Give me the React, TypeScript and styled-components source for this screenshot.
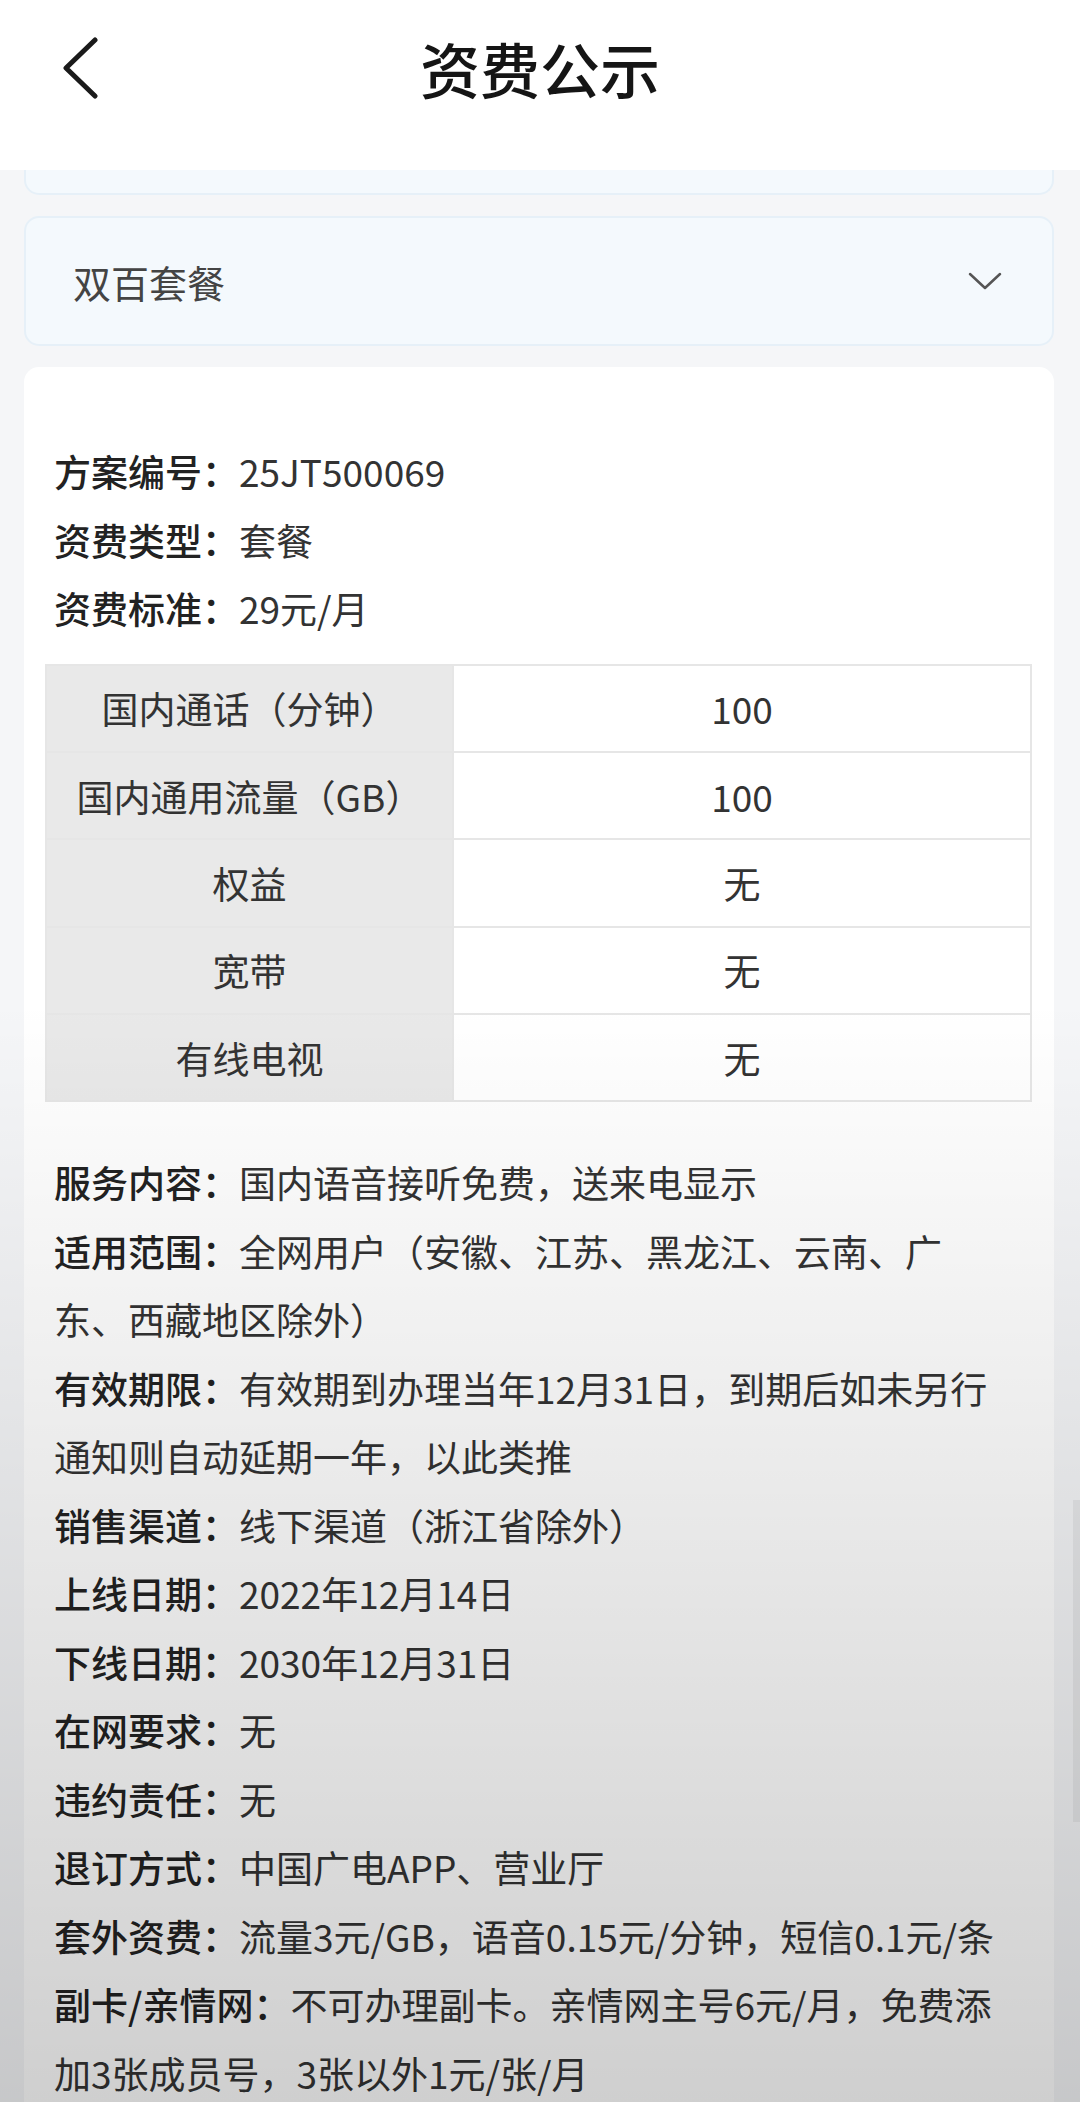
import React from "react";
import styled, { createGlobalStyle } from "styled-components";

const GlobalStyle = createGlobalStyle`
  html, body {
    margin: 0;
    padding: 0;
    background: #f5f6f8;
  }
  body {
    font-family: "Noto Sans CJK SC", "Noto Sans", "Liberation Sans", sans-serif;
    color: #333;
  }
  * { box-sizing: border-box; }
`;

const Page = styled.div`
  position: relative;
  width: 1080px;
  height: 2102px;
  overflow: hidden;
  background: #f5f6f8;
`;

const Header = styled.header`
  height: 170px;
  background: #ffffff;
  display: grid;
  grid-template-columns: 1fr auto 1fr;
  align-items: center;
  padding-bottom: 34px;
`;

const BackButton = styled.button`
  justify-self: start;
  margin-left: 62px;
  border: none;
  background: none;
  padding: 0;
  display: flex;
  align-items: center;
  cursor: pointer;
`;

const Title = styled.h1`
  margin: 0;
  font-size: 60px;
  line-height: 1;
  font-weight: 500;
  color: #151515;
  letter-spacing: 0;
`;

const Content = styled.main`
  display: flex;
  flex-direction: column;
  gap: 21px;
  padding: 0 26px 0 24px;
`;

const CutCard = styled.div`
  height: 25px;
  background: #f4f9fd;
  border: 2px solid #e6f0f8;
  border-top: none;
  border-radius: 0 0 15px 15px;
`;

const Collapse = styled.div`
  height: 130px;
  background: #f4f9fd;
  border: 2px solid #e6f0f8;
  border-radius: 15px;
  display: flex;
  align-items: center;
  justify-content: space-between;
  padding: 0 50px 0 47px;
`;

const CollapseTitle = styled.span`
  font-size: 38px;
  color: #444;
  font-weight: 400;
`;

const DetailCard = styled.section`
  background: #ffffff;
  border-radius: 15px;
  padding: 70px 22px 80px 21px;
  min-height: 1800px;
`;

const InfoList = styled.div<{ $top?: number }>`
  padding: 0 8px 0 9px;
  margin-top: ${(p) => p.$top ?? 0}px;
`;

const InfoRow = styled.p`
  margin: 0;
  font-size: 37px;
  line-height: 68.5px;
  color: #333;
`;

const Label = styled.span`
  font-weight: 500;
  color: #222;
`;

const Table = styled.table`
  width: 100%;
  margin-top: 21px;
  border-collapse: collapse;
  table-layout: fixed;
`;

const Cell = styled.td<{ $head?: boolean }>`
  height: 87.4px;
  padding: 0;
  text-align: center;
  vertical-align: middle;
  font-size: 37px;
  color: #333;
  border: 2px solid #e6e6e6;
  background: ${(p) => (p.$head ? "#e9e9e9" : "#ffffff")};
  width: ${(p) => (p.$head ? "407px" : "auto")};
`;

const Shade = styled.div`
  position: absolute;
  inset: 0;
  pointer-events: none;
  background: linear-gradient(
    to bottom,
    rgba(0, 0, 0, 0) 0px,
    rgba(0, 0, 0, 0) 1000px,
    rgba(0, 0, 0, 0.19) 2102px
  );
`;

const ScrollThumb = styled.div`
  position: absolute;
  right: 0;
  top: 1500px;
  width: 7px;
  height: 322px;
  background: rgba(0, 0, 0, 0.05);
  pointer-events: none;
`;

const BackIcon = () => (
  <svg width="36" height="62" viewBox="0 0 36 62" fill="none">
    <path
      d="M33 3 L4 31 L33 59"
      stroke="#1a1a1a"
      strokeWidth="5"
      strokeLinecap="round"
      strokeLinejoin="round"
    />
  </svg>
);

const ChevronDown = () => (
  <svg width="34" height="18" viewBox="0 0 34 18" fill="none">
    <path
      d="M2 2 L17 16 L32 2"
      stroke="#555"
      strokeWidth="2.5"
      strokeLinecap="round"
      strokeLinejoin="round"
    />
  </svg>
);

type Info = [string, string[]];

const topInfo: Info[] = [
  ["方案编号：", ["25JT500069"]],
  ["资费类型：", ["套餐"]],
  ["资费标准：", ["29元/月"]],
];

const tableRows: [string, string][] = [
  ["国内通话（分钟）", "100"],
  ["国内通用流量（GB）", "100"],
  ["权益", "无"],
  ["宽带", "无"],
  ["有线电视", "无"],
];

const bottomInfo: Info[] = [
  ["服务内容：", ["国内语音接听免费，送来电显示"]],
  ["适用范围：", ["全网用户（安徽、江苏、黑龙江、云南、广", "东、西藏地区除外）"]],
  ["有效期限：", ["有效期到办理当年12月31日，到期后如未另行", "通知则自动延期一年，以此类推"]],
  ["销售渠道：", ["线下渠道（浙江省除外）"]],
  ["上线日期：", ["2022年12月14日"]],
  ["下线日期：", ["2030年12月31日"]],
  ["在网要求：", ["无"]],
  ["违约责任：", ["无"]],
  ["退订方式：", ["中国广电APP、营业厅"]],
  ["套外资费：", ["流量3元/GB，语音0.15元/分钟，短信0.1元/条"]],
  ["副卡/亲情网：", ["不可办理副卡。亲情网主号6元/月，免费添", "加3张成员号，3张以外1元/张/月"]],
];

const renderInfo = ([k, lines]: Info) => (
  <InfoRow key={k}>
    <Label>{k}</Label>
    {lines.map((line, i) => (
      <React.Fragment key={i}>
        {i > 0 && <br />}
        {line}
      </React.Fragment>
    ))}
  </InfoRow>
);

export default function App() {
  return (
    <>
      <GlobalStyle />
      <Page>
        <Header>
          <BackButton aria-label="返回">
            <BackIcon />
          </BackButton>
          <Title>资费公示</Title>
          <span />
        </Header>
        <Content>
          <CutCard />
          <Collapse>
            <CollapseTitle>双百套餐</CollapseTitle>
            <ChevronDown />
          </Collapse>
          <DetailCard>
            <InfoList>{topInfo.map(renderInfo)}</InfoList>
            <Table>
              <tbody>
                {tableRows.map(([k, v]) => (
                  <tr key={k}>
                    <Cell $head>{k}</Cell>
                    <Cell>{v}</Cell>
                  </tr>
                ))}
              </tbody>
            </Table>
            <InfoList $top={46}>{bottomInfo.map(renderInfo)}</InfoList>
          </DetailCard>
        </Content>
        <Shade />
        <ScrollThumb />
      </Page>
    </>
  );
}
